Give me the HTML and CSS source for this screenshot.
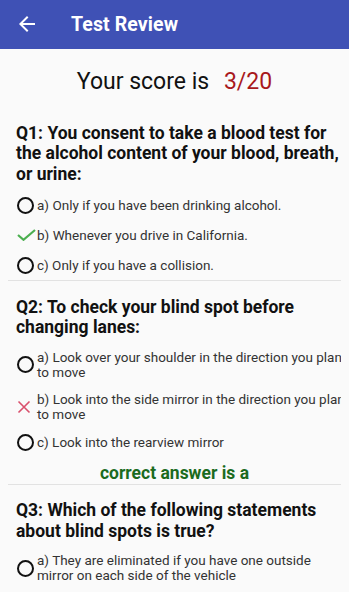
FILE: index.html
```html
<!DOCTYPE html>
<html lang="en">
  <head>
    <meta charset="UTF-8">
    <meta name="viewport" content="width=device-width, initial-scale=1.0">
    <title>Test Review</title>
    <link rel="stylesheet" href="styles.css">
  </head>
  <body>
    <div class="toolbar">
      <span class="back">
        <svg viewBox="0 0 24 24" width="24" height="24"><path d="M20 11H7.83l5.59-5.59L12 4l-8 8 8 8 1.41-1.41L7.83 13H20v-2z" fill="#fff"/></svg>
      </span>
      <h1 class="title">Test Review</h1>
    </div>

    <div class="score">Your score is <span class="points">3/20</span></div>

    <div class="list">
      <div class="question">
        <h3 class="q-text">Q1: You consent to take a blood test for the alcohol content of your blood, breath, or urine:</h3>
        <div class="option">
          <span class="icon"><span class="radio"></span></span>
          <span class="opt-text">a) Only if you have been drinking alcohol.</span>
        </div>
        <div class="option">
          <span class="icon">
            <svg viewBox="0 0 19 12" width="19" height="12"><polyline points="1,6 6.5,10.8 18,1" fill="none" stroke="#4caf50" stroke-width="2.2"/></svg>
          </span>
          <span class="opt-text">b) Whenever you drive in California.</span>
        </div>
        <div class="option">
          <span class="icon"><span class="radio"></span></span>
          <span class="opt-text">c) Only if you have a collision.</span>
        </div>
      </div>

      <div class="question">
        <h3 class="q-text">Q2: To check your blind spot before changing lanes:</h3>
        <div class="option">
          <span class="icon"><span class="radio"></span></span>
          <span class="opt-text">a) Look over your shoulder in the direction you plan to move</span>
        </div>
        <div class="option">
          <span class="icon">
            <svg viewBox="0 0 14 14" width="14" height="14"><path d="M1.5 1.5L12.5 12.5M12.5 1.5L1.5 12.5" stroke="#d9506c" stroke-width="1.6"/></svg>
          </span>
          <span class="opt-text">b) Look into the side mirror in the direction you plan to move</span>
        </div>
        <div class="option">
          <span class="icon"><span class="radio"></span></span>
          <span class="opt-text">c) Look into the rearview mirror</span>
        </div>
        <div class="correct">correct answer is a</div>
      </div>

      <div class="question">
        <h3 class="q-text">Q3: Which of the following statements about blind spots is true?</h3>
        <div class="option">
          <span class="icon"><span class="radio"></span></span>
          <span class="opt-text">a) They are eliminated if you have one outside mirror on each side of the vehicle</span>
        </div>
      </div>
    </div>
  </body>
</html>
```

FILE: styles.css
```css
html,
body {
  margin: 0;
  background-color: #fafafa;
  font-family: Roboto, "Liberation Sans", sans-serif;
}
.toolbar {
  height: 49px;
  background-color: #3f51b5;
  display: flex;
  align-items: center;
  color: #ffffff;
}
.back {
  width: 24px;
  height: 24px;
  margin-left: 15px;
  margin-top: -1px;
}
.back svg {
  display: block;
}
.title {
  margin: 0 0 0 32px;
  font-size: 19.5px;
  font-weight: bold;
  letter-spacing: 0.1px;
}
.score {
  padding: 19px 0 8px;
  line-height: 28px;
  font-size: 23px;
  text-align: center;
  color: #111111;
}
.points {
  margin-left: 9px;
  color: #a8181c;
}
.list {
  margin: 0 8px;
  overflow: hidden;
}
.question {
  padding: 15.5px 0 0;
  border-top: 1px solid #e2e2e2;
}
.question:first-child {
  padding-top: 18.5px;
  border-top: none;
}
.q-text {
  margin: 0 0 6px 8px;
  font-size: 17.5px;
  line-height: 20.5px;
  font-weight: bold;
  color: #111111;
}
.option {
  display: flex;
  align-items: center;
  min-height: 30px;
  padding: 6px 0;
  box-sizing: border-box;
}
.icon {
  flex: none;
  width: 20px;
  margin-left: 9px;
  display: flex;
  align-items: center;
}
.icon svg {
  display: block;
}
.radio {
  width: 17px;
  height: 17px;
  border: 2.2px solid #111111;
  border-radius: 50%;
  box-sizing: border-box;
}
.opt-text {
  flex: none;
  width: 312px;
  font-size: 13.5px;
  line-height: 15px;
  color: #333333;
}
.correct {
  margin: 5px 0 1px;
  line-height: 20px;
  font-size: 17.5px;
  font-weight: bold;
  text-align: center;
  color: #1b6b1e;
}
```
